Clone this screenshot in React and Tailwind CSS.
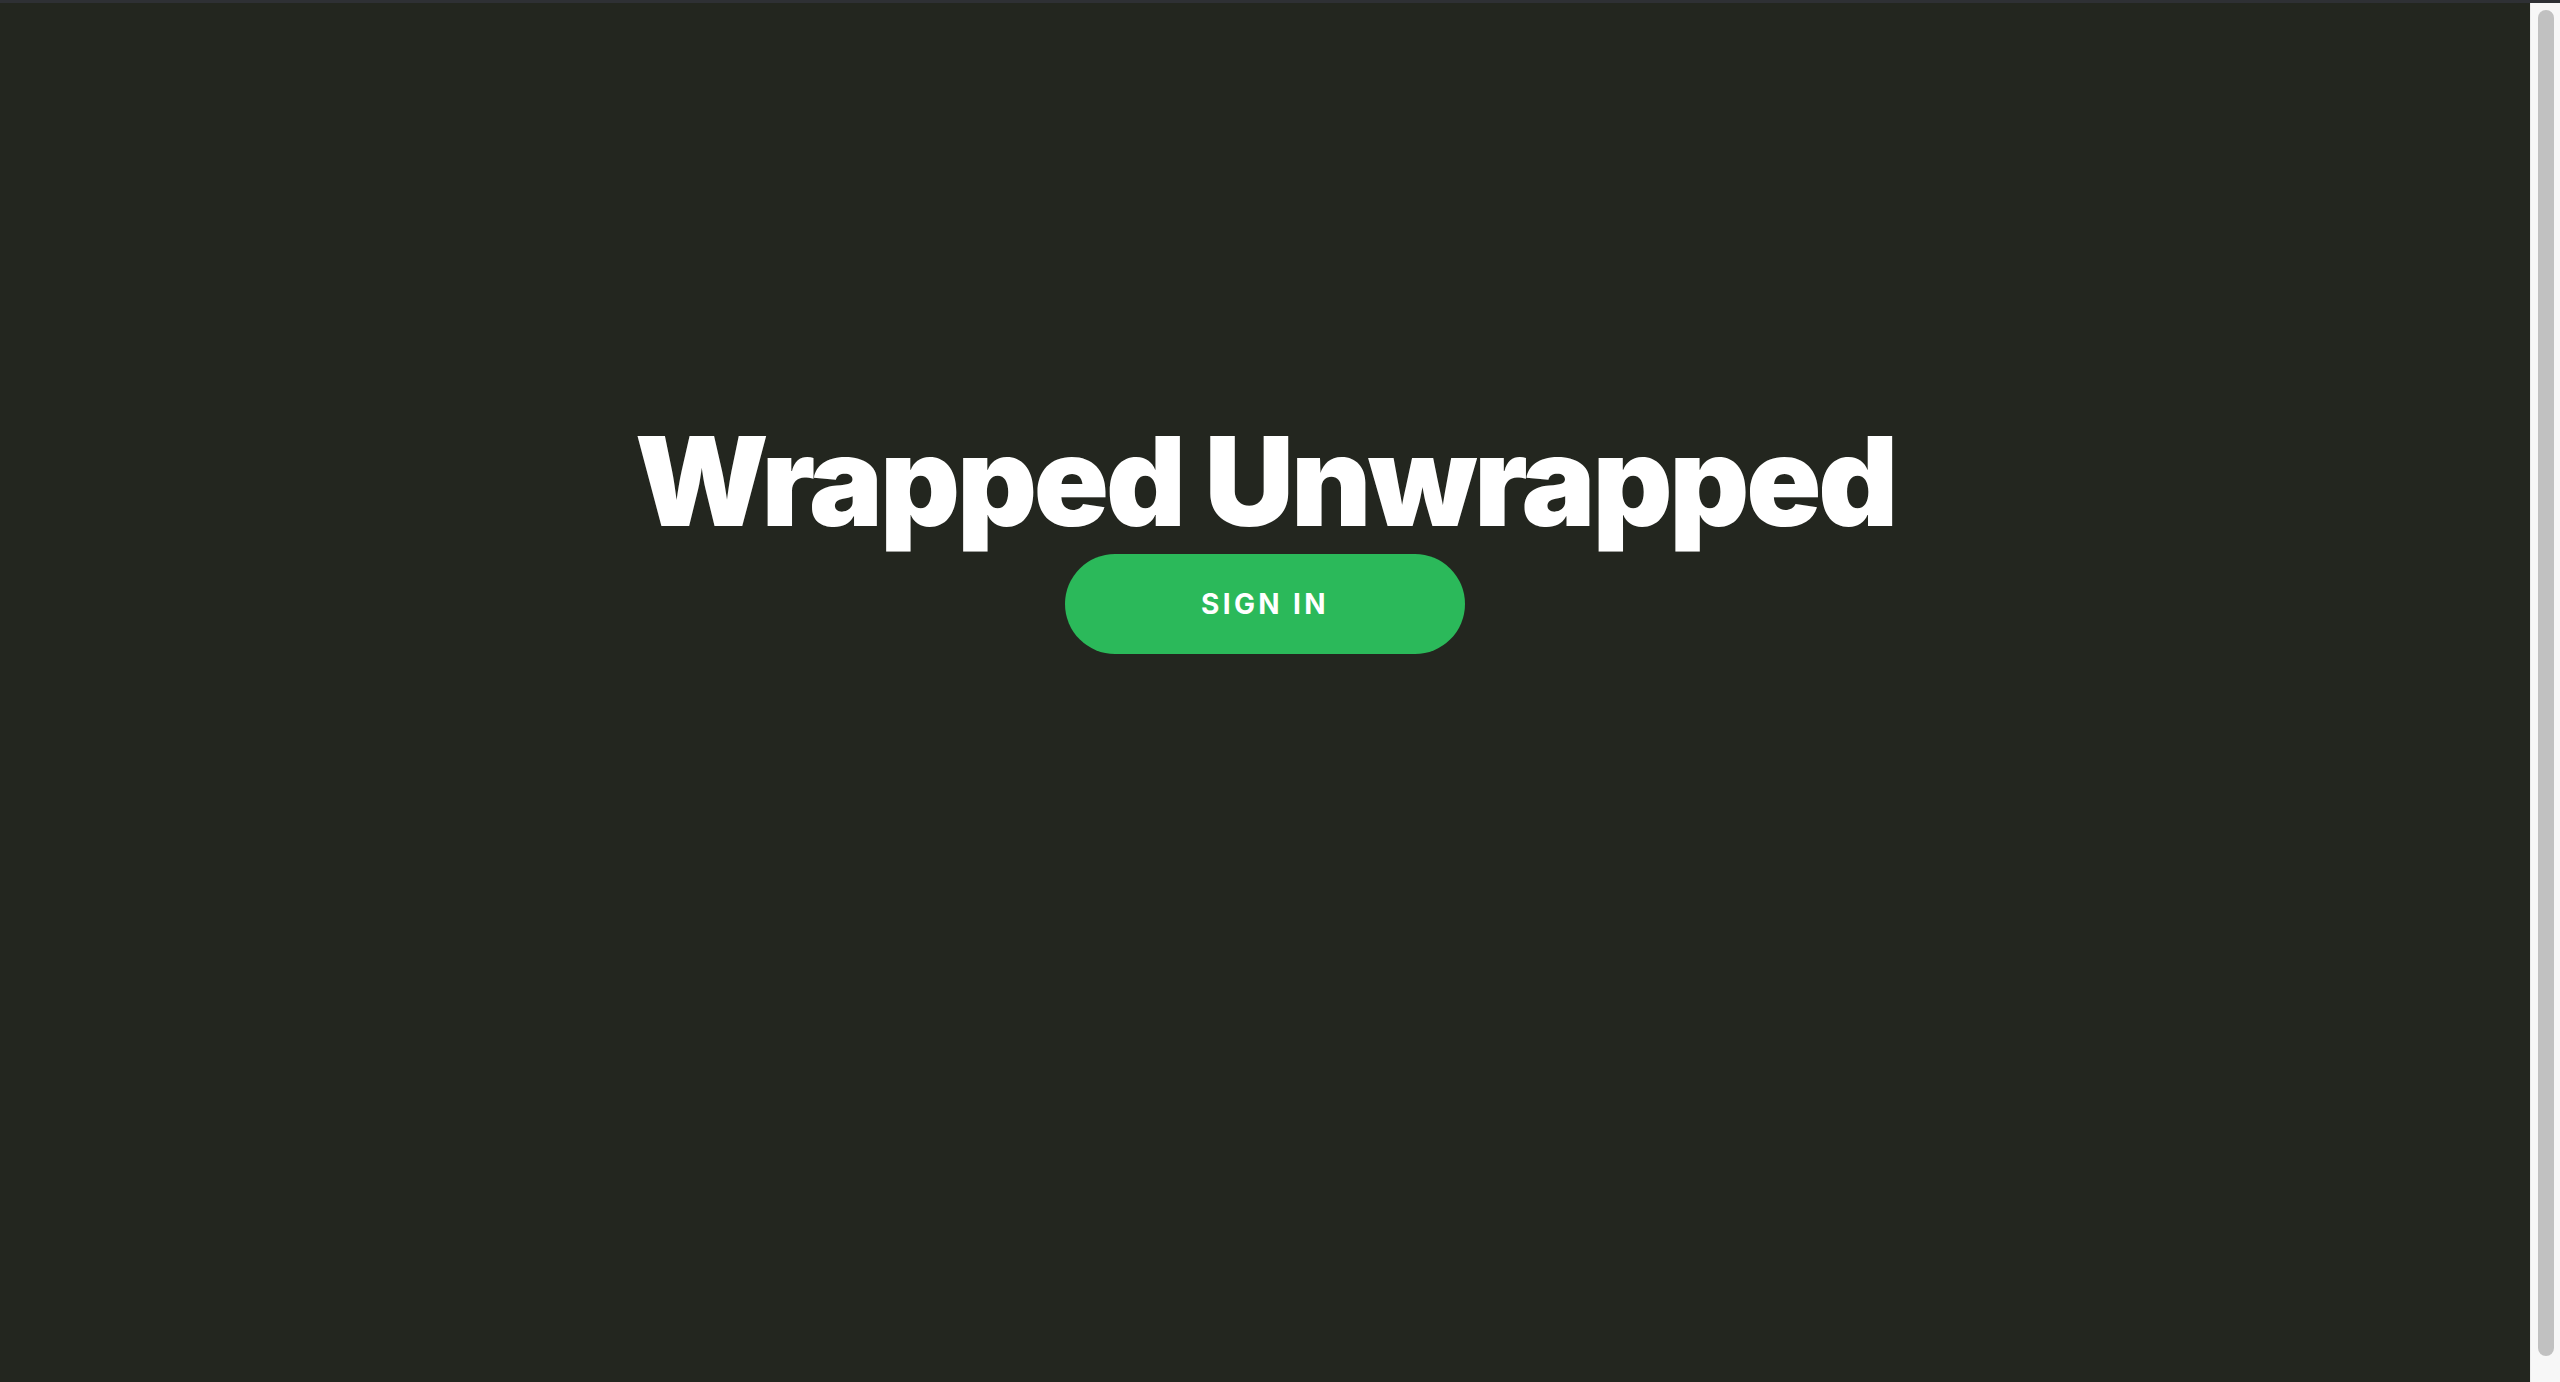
export default function App() {
  return (
    <div className="h-[1382px] w-[2560px] overflow-hidden flex flex-col bg-[#23261f]">
      <div className="h-[3px] w-full bg-[#2e3034] shrink-0" />
      <div className="flex flex-1 min-h-0">
        <main className="flex-1 flex flex-col items-center pt-[416px]">
          <h1 className="text-white text-[124px] leading-none font-black tracking-[-0.025em] font-['Inter',sans-serif] whitespace-nowrap">
            Wrapped Unwrapped
          </h1>
          <button className="mt-[11px] w-[400px] h-[100px] rounded-full bg-[#2bb95a] text-white text-[28px] font-bold tracking-[0.12em] font-['Inter',sans-serif] flex items-center justify-center">
            SIGN IN
          </button>
        </main>
        <div className="w-[30px] shrink-0 bg-[#f7f7f7] border-l border-[#ececec] flex justify-center pt-[7px] pb-[26px]">
          <div className="w-[16px] h-full rounded-full bg-[#c1c1c1]" />
        </div>
      </div>
    </div>
  );
}
